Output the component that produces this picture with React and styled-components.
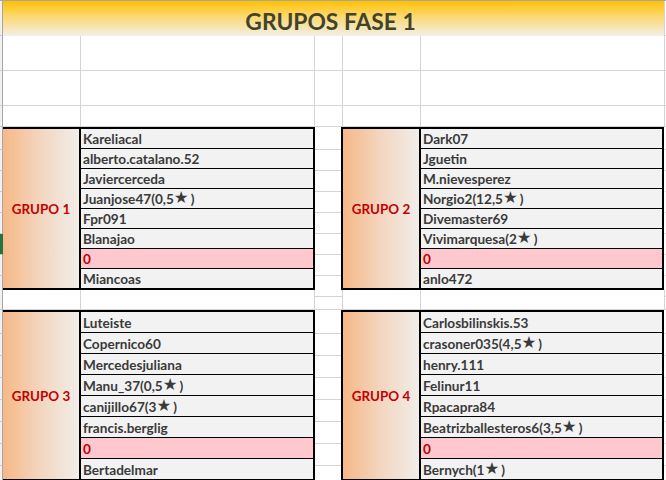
import React from 'react';
import styled, { createGlobalStyle } from 'styled-components';

const GRID = '#d4d4d4';

const groups = [
  {
    label: 'GRUPO 1',
    players: ['Kareliacal', 'alberto.catalano.52', 'Javiercerceda', 'Juanjose47(0,5★)', 'Fpr091', 'Blanajao', '0', 'Miancoas'],
  },
  {
    label: 'GRUPO 2',
    players: ['Dark07', 'Jguetin', 'M.nievesperez', 'Norgio2(12,5★)', 'Divemaster69', 'Vivimarquesa(2★)', '0', 'anlo472'],
  },
  {
    label: 'GRUPO 3',
    players: ['Luteiste', 'Copernico60', 'Mercedesjuliana', 'Manu_37(0,5★)', 'canijillo67(3★)', 'francis.berglig', '0', 'Bertadelmar'],
  },
  {
    label: 'GRUPO 4',
    players: ['Carlosbilinskis.53', 'crasoner035(4,5★)', 'henry.111', 'Felinur11', 'Rpacapra84', 'Beatrizballesteros6(3,5★)', '0', 'Bernych(1★)'],
  },
];

// grid lines beside each block of tables
const block1 = [22, 20, 20, 20, 20, 20, 20, 20];
const block2 = [23, 21, 21, 21, 21, 21, 21, 21];

const GlobalStyle = createGlobalStyle`
  html, body {
    margin: 0;
    padding: 0;
    background: #fff;
    overflow: hidden;
  }
  body {
    font-family: Lato, "Liberation Sans", sans-serif;
  }
`;

const Sheet = styled.div`
  width: 666px;
  height: 480px;
  overflow: hidden;
  display: grid;
  grid-template-columns: 3px 78px 234px 28px 78px 244px 1px;
  grid-template-rows: 35px 35px 35px 21px 163px 20px 171px;
  border-top: 1px solid #a6a6a6;
  background: #fff;
`;

const Gutter = styled.div`
  background: ${p => (p.$selected ? '#217346' : '#f1f1f1')};
  border-right: 1px solid ${p => (p.$selected ? '#217346' : '#a6a6a6')};
  border-bottom: 1px solid #c8c8c8;
  height: ${p => (p.$h ? `${p.$h}px` : 'auto')};
  flex: none;
`;

const Blank = styled.div`
  border-right: ${p => (p.$edge ? 'none' : `1px solid ${GRID}`)};
  border-bottom: 1px solid ${GRID};
`;

const Stack = styled.div`
  display: flex;
  flex-direction: column;
  border-right: ${p => (p.$edge ? 'none' : `1px solid ${GRID}`)};
`;

const StackLine = styled.div`
  flex: none;
  height: ${p => p.$h}px;
  border-bottom: 1px solid ${GRID};
`;

const Title = styled.div`
  grid-column: 2 / 7;
  display: flex;
  align-items: center;
  justify-content: center;
  padding: 4px 6px 0 0;
  background: linear-gradient(to bottom, #ffc000 0%, #fdd45c 35%, #f2efe8 100%);
  border-right: 1px solid ${GRID};
  color: #43432a;
  font-size: 22.8px;
  font-weight: 700;
`;

const Table = styled.div`
  grid-column: ${p => p.$col};
  display: grid;
  grid-template-columns: 78px 1fr;
  border: 2px solid #000;
  border-left-width: ${p => (p.$open ? 0 : 2)}px;
  margin: ${p => (p.$open ? '0' : '0 1px 0 -2px')};
  background: #f2f2f2;
`;

const Label = styled.div`
  display: flex;
  align-items: center;
  justify-content: center;
  background: linear-gradient(to right, #f6b887 0%, #f3d6c0 50%, #f1ede9 100%);
  border-right: 2px solid #000;
  color: #c00000;
  font-size: 13.4px;
  font-weight: 700;
`;

const Names = styled.div`
  display: flex;
  flex-direction: column;
`;

const Name = styled.div`
  height: ${p => p.$h}px;
  display: flex;
  align-items: center;
  padding: 1px 0 0 2px;
  box-sizing: border-box;
  border-bottom: 1px solid #000;
  background: ${p => (p.$empty ? '#ffc7ce' : '#f2f2f2')};
  color: ${p => (p.$empty ? '#c00000' : '#3a3a3a')};
  font-size: 13.6px;
  font-weight: 700;
  white-space: nowrap;

  &:last-child {
    height: ${p => p.$h - 1}px;
    border-bottom: none;
  }
`;

const Star = styled.span`
  font-family: "DejaVu Sans", sans-serif;
  font-size: 16.5px;
  margin: 0 2px 1px 0;
  line-height: 1;
`;

const renderName = (text) => {
  const parts = text.split('★');
  if (parts.length === 1) return text;
  return (
    <>
      {parts[0]}
      <Star>★</Star>
      {parts[1]}
    </>
  );
};

const Group = ({ group, col, open, rowHeight }) => (
  <Table $col={col} $open={open}>
    <Label>{group.label}</Label>
    <Names>
      {group.players.map((p, i) => (
        <Name key={i} $h={rowHeight} $empty={p === '0'}>
          {renderName(p)}
        </Name>
      ))}
    </Names>
  </Table>
);

const GridStack = ({ heights, edge }) => (
  <Stack $edge={edge}>
    {heights.map((h, i) => (
      <StackLine key={i} $h={h} />
    ))}
  </Stack>
);

const GutterStack = ({ heights, selected }) => (
  <Stack $edge>
    {heights.map((h, i) => (
      <Gutter key={i} $h={h} $selected={i === selected} />
    ))}
  </Stack>
);

const BlankRow = () => (
  <>
    <Gutter />
    <Blank />
    <Blank />
    <Blank />
    <Blank />
    <Blank />
    <Blank $edge />
  </>
);

const App = () => {
  return (
    <>
      <GlobalStyle />
      <Sheet>
        <Gutter />
        <Title>GRUPOS FASE 1</Title>
        <Blank $edge />

        <BlankRow />
        <BlankRow />
        <BlankRow />

        <GutterStack heights={block1} selected={5} />
        <Group group={groups[0]} col="2 / 4" open rowHeight={20} />
        <GridStack heights={block1} />
        <Group group={groups[1]} col="5 / 7" rowHeight={20} />
        <GridStack heights={block1} edge />

        <BlankRow />

        <GutterStack heights={block2} />
        <Group group={groups[2]} col="2 / 4" open rowHeight={21} />
        <GridStack heights={block2} />
        <Group group={groups[3]} col="5 / 7" rowHeight={21} />
        <GridStack heights={block2} edge />
      </Sheet>
    </>
  );
};

export default App;
